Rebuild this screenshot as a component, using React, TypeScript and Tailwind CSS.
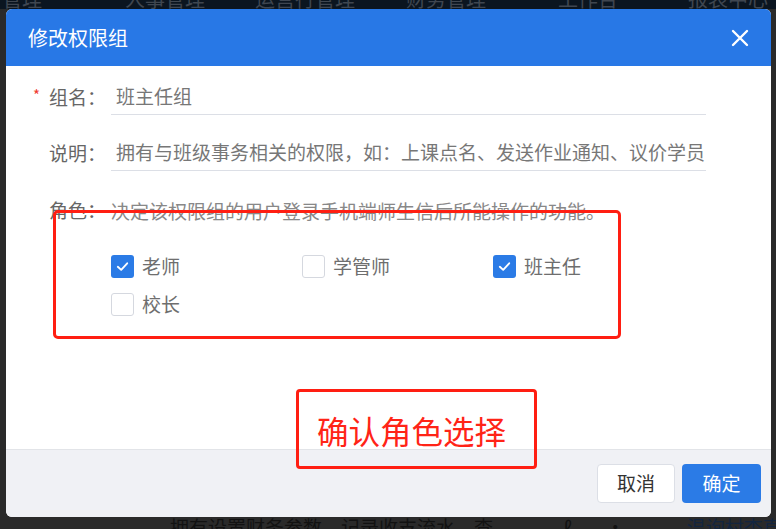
import React from "react";

const font = { fontFamily: '"Noto Sans CJK SC", "Noto Sans", sans-serif' };

function Check({ checked }: { checked: boolean }) {
  return checked ? (
    <span className="flex h-[23px] w-[23px] items-center justify-center rounded-[3px] bg-[#2b7be6]">
      <svg width="15" height="15" viewBox="0 0 16 16" fill="none">
        <path d="M3 8.3 L6.6 11.6 L13 4.6" stroke="white" strokeWidth="2" strokeLinecap="round" strokeLinejoin="round" />
      </svg>
    </span>
  ) : (
    <span className="block h-[23px] w-[23px] rounded-[3px] border border-[#d5d8df] bg-white" />
  );
}

function Item({ label, checked }: { label: string; checked: boolean }) {
  return (
    <div className="flex h-[24px] items-center gap-[8px]">
      <Check checked={checked} />
      <span className="text-[19px] leading-[24px] text-[#6e6e6e]">{label}</span>
    </div>
  );
}

export default function App() {
  return (
    <div className="relative h-[529px] w-[776px] overflow-hidden bg-[#2a2a2a]" style={font}>
      {/* background page (dimmed) */}
      <div className="h-[9px] overflow-hidden bg-[#0b1520]">
        <div className="-mt-[11px] flex whitespace-nowrap text-[20px] leading-[20px] text-[#3f4650]">
          <span className="ml-[-18px] w-[143px]">务管理</span>
          <span className="w-[130px]">人事管理</span>
          <span className="w-[151px]">运营行管理</span>
          <span className="w-[152px]">财务管理</span>
          <span className="w-[130px]">工作台</span>
          <span>报表中心</span>
        </div>
      </div>
      <div className="flex h-[520px] flex-col justify-end">
        <div className="flex h-[12px] items-start overflow-hidden whitespace-nowrap text-[19px] leading-[19px]">
          <span className="ml-[170px] text-[#121212]">拥有设置财务参数、记录收支流水、查</span>
          <span className="ml-[70px] text-[#121212]">ℓ</span>
          <span className="ml-[34px] text-[#121212]">•</span>
          <span className="ml-[52px] h-[12px] w-px bg-[#3a3a3a]" />
          <span className="ml-[10px] text-[#13253f]">温询村杏直</span>
        </div>
      </div>

      {/* dialog */}
      <div className="absolute left-[6px] top-[9px] flex w-[765px] flex-col overflow-hidden rounded-[6px] bg-white">
        <div className="flex h-[57px] items-center justify-between bg-[#2878e6] pl-[22px] pr-[22px]">
          <span className="text-[20px] text-white">修改权限组</span>
          <svg width="18" height="18" viewBox="0 0 18 18">
            <path d="M2 2 L16 16 M16 2 L2 16" stroke="white" strokeWidth="2.4" strokeLinecap="round" />
          </svg>
        </div>
        <div className="relative h-[383px] pt-[13px]">
          <div className="flex items-center pl-[27px]">
            <span className="w-[16px] self-start pt-[8px] text-[15px] leading-[15px] text-[#f03a2e]">*</span>
            <span className="w-[62px] text-[19px] text-[#666]">组名：</span>
            <div className="flex h-[36px] w-[595px] items-center border-b border-[#dcdfe6] pl-[5px] text-[19px] text-[#777]">
              班主任组
            </div>
          </div>
          <div className="mt-[20px] flex items-center pl-[27px]">
            <span className="w-[16px]" />
            <span className="w-[62px] text-[19px] text-[#666]">说明：</span>
            <div className="flex h-[36px] w-[595px] items-center overflow-hidden whitespace-nowrap border-b border-[#dcdfe6] pl-[5px] text-[19px] text-[#777]">
              拥有与班级事务相关的权限，如：上课点名、发送作业通知、议价学员
            </div>
          </div>
          <div className="mt-[20px] flex h-[38px] items-center pl-[27px]">
            <span className="w-[16px]" />
            <span className="w-[62px] text-[19px] text-[#666]">角色：</span>
            <span className="pt-[3px] text-[19px] text-[#888]">决定该权限组的用户登录手机端师生信后所能操作的功能。</span>
          </div>
          <div className="ml-[105px] mt-[25px] grid w-[573px] grid-cols-3 gap-y-[14px]">
            <Item label="老师" checked />
            <Item label="学管师" checked={false} />
            <Item label="班主任" checked />
            <Item label="校长" checked={false} />
          </div>

          {/* annotations */}
          <div className="absolute left-[47px] top-[144px] h-[129px] w-[568px] rounded-[5px] border-[3.5px] border-[#ff1e12]" />
          <div className="absolute left-[290px] top-[323px] flex h-[80px] w-[241px] items-center rounded-[4px] border-[3.5px] border-[#ff1e12] pl-[18px] pt-[4px]">
            <span className="text-[31.5px] leading-none text-[#ff2417]">确认角色选择</span>
          </div>
        </div>
        <div className="flex h-[68px] items-start justify-end gap-[7px] border-t border-[#e2e4e8] bg-[#f0f1f5] pr-[10px] pt-[14px]">
          <button className="flex h-[39px] w-[78px] items-center justify-center rounded-[4px] border border-[#dcdfe6] bg-white text-[19px] text-[#333]" style={font}>
            取消
          </button>
          <button className="flex h-[39px] w-[79px] items-center justify-center rounded-[4px] bg-[#2b7be6] text-[19px] text-white" style={font}>
            确定
          </button>
        </div>
      </div>
    </div>
  );
}
